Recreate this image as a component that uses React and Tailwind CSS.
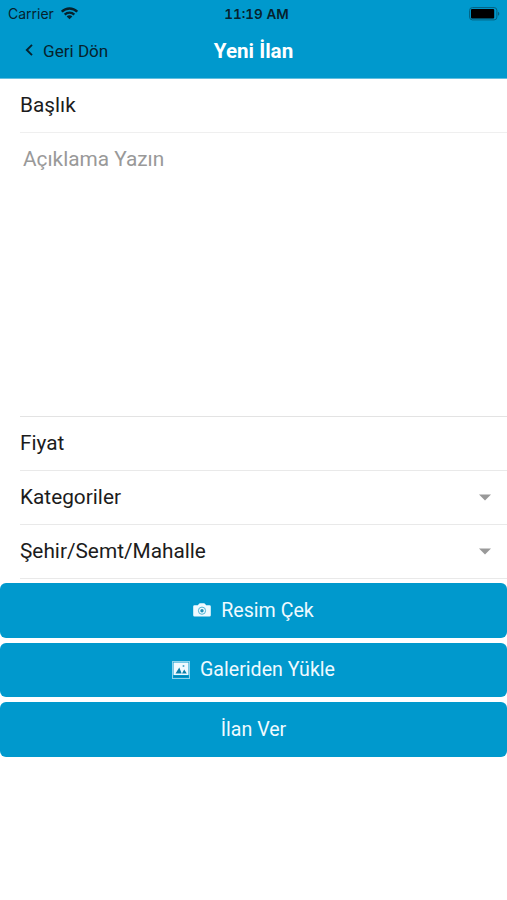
import { useState } from 'react'

const BUTTONS = [
  { id: 'camera', label: 'Resim Çek', Icon: CameraIcon },
  { id: 'gallery', label: 'Galeriden Yükle', Icon: PictureIcon },
  { id: 'publish', label: 'İlan Ver' },
]

function WifiIcon() {
  return (
    <svg className="w-[17px] h-[13px]" viewBox="0 0 17 12" fill="none" stroke="#06222d" strokeWidth="2.3">
      <path d="M.8 4.2a10.9 10.9 0 0 1 15.4 0" />
      <path d="M3.7 7.1a6.8 6.8 0 0 1 9.6 0" />
      <path d="M8.5 11.8 5.7 9a3.9 3.9 0 0 1 5.6 0z" fill="#06222d" stroke="none" />
    </svg>
  )
}

function BatteryIcon() {
  return (
    <svg className="w-[31px] h-[14px]" viewBox="0 0 31 14">
      <rect x="0.6" y="0.6" width="27.3" height="12.3" rx="2.8" fill="none" stroke="#04617f" strokeWidth="1" />
      <rect x="2" y="2" width="23.2" height="9.5" rx="1" fill="#000" />
      <path d="M29 4.8c1.8.6 1.8 3.4 0 4z" fill="#04617f" />
    </svg>
  )
}

function CameraIcon() {
  return (
    <svg className="w-[18px] h-[14px]" viewBox="0 0 18 14">
      <path d="M1.6 2.2h3.2L6.3.6Q6.7.2 7.3.2h3.4q.6 0 1 .4l1.5 1.6h3.2q1.4 0 1.4 1.4v8.6q0 1.4-1.4 1.4H1.6Q.2 13.6.2 12.2V3.6Q.2 2.2 1.6 2.2z" fill="#effaff" />
      <circle cx="9" cy="7.7" r="3.6" fill="none" stroke="#4fb5d6" strokeWidth="1" />
      <circle cx="9" cy="7.7" r="1.7" fill="#1f8fb5" />
    </svg>
  )
}

function PictureIcon() {
  return (
    <svg className="w-[18px] h-[18px]" viewBox="0 0 18 18">
      <rect x="0.5" y="0.5" width="17" height="17" fill="none" stroke="#8fd3ea" />
      <rect x="1.5" y="1.5" width="15" height="12.5" fill="#effaff" />
      <path d="M3.5 12.5 7.3 6.5 9.7 12.5zM10 12.5l2.2-4 2.6 4z" fill="#0b7ea8" />
      <circle cx="11.5" cy="5" r="1" fill="#4aa9c9" />
      <path d="M2 15.5h14" stroke="#0783b0" />
    </svg>
  )
}

function SelectRow({ label }) {
  return (
    <button className="ml-[20px] h-[54px] flex items-center justify-between border-b border-[#e9e9e9] pr-[16px] text-left">
      <span>{label}</span>
      <svg className="w-[12px] h-[7px]" viewBox="0 0 12 7"><path d="M0 .5h12L6 6.5z" fill="#999" /></svg>
    </button>
  )
}

export default function App() {
  const [description, setDescription] = useState('')

  return (
    <div className="w-full h-[900px] bg-white flex flex-col font-[Roboto,sans-serif] text-[20.8px] text-[#1c1c1c]">
      <header className="h-[79px] shrink-0 bg-[#0099cd] border-b border-[#62bfdf]">
        <div className="h-[27px] grid grid-cols-3 items-center pl-[8px] pr-[7px] text-[#06222d]">
          <div className="flex items-center gap-[7px] font-[Inter,sans-serif] text-[14px]">
            <span>Carrier</span>
            <WifiIcon />
          </div>
          <span className="pt-px pl-[5px] text-center font-[Inter,sans-serif] text-[13.5px] font-semibold [font-feature-settings:'tnum'] whitespace-nowrap">11:19 AM</span>
          <div className="flex justify-end"><BatteryIcon /></div>
        </div>
        <div className="h-[49px] grid grid-cols-3 items-center">
          <button className="flex items-center pl-[25px] gap-[10px] text-[17.1px] text-[#06222d]">
            <svg className="mb-[3px] w-[8px] h-[12px]" viewBox="0 0 8 12" fill="none" stroke="#06222d" strokeWidth="1.9"><path d="M7 .8 1.8 6 7 11.2" /></svg>
            <span className="pt-px">Geri Dön</span>
          </button>
          <h1 className="text-center text-[20.6px] font-bold text-white">Yeni İlan</h1>
        </div>
      </header>

      {/* İlan bilgileri */}
      <main className="flex flex-col">
        <div className="ml-[20px] h-[54px] flex items-center border-b border-[#efefef]">Başlık</div>
        <textarea
          value={description}
          onChange={(e) => setDescription(e.target.value)}
          placeholder="Açıklama Yazın"
          className="ml-[20px] h-[284px] resize-none border-b border-[#e3e3e3] pl-[3px] pt-[10px] leading-[32px] outline-none placeholder:text-[#999]"
        />
        <div className="ml-[20px] h-[54px] flex items-center border-b border-[#e9e9e9]">Fiyat</div>
        <SelectRow label="Kategoriler" />
        <SelectRow label="Şehir/Semt/Mahalle" />
      </main>

      {/* Alt butonlar */}
      <div className="flex flex-col gap-[5px] pt-[4px]">
        {BUTTONS.map(({ id, label, Icon }) => (
          <button key={id} className="h-[54.5px] flex items-center justify-center gap-[10px] rounded-[6px] bg-[#0099cd] text-[19.6px] text-[#effaff]">
            {Icon && <Icon />}
            <span>{label}</span>
          </button>
        ))}
      </div>
    </div>
  )
}
